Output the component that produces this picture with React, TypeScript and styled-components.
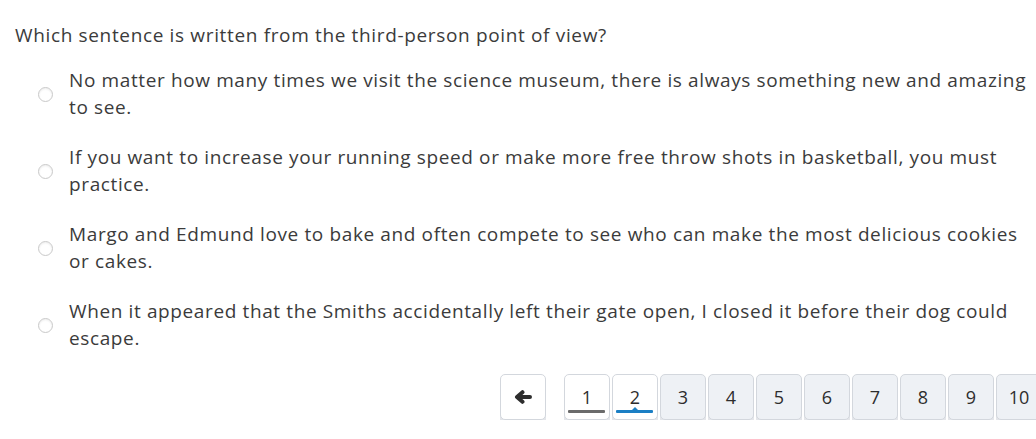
import React from 'react';
import styled, { createGlobalStyle } from 'styled-components';

const GlobalStyle = createGlobalStyle`
  html, body {
    margin: 0;
    padding: 0;
    background: #ffffff;
    overflow: hidden;
  }
  body {
    font-family: 'Open Sans', 'Liberation Sans', sans-serif;
    color: #3b3b3b;
  }
`;

const Page = styled.main`
  width: 1058px;
  padding: 21px 0 0 15px;
  box-sizing: border-box;
`;

const Question = styled.h2`
  margin: 0 0 18px;
  font-size: 19px;
  font-weight: 400;
  letter-spacing: 0.65px;
  line-height: 28px;
  color: #3b3b3b;
`;

const Choices = styled.ul`
  list-style: none;
  width: 1017px;
  box-sizing: border-box;
  margin: 0;
  padding: 0 0 0 23px;
  display: flex;
  flex-direction: column;
  gap: 23px;
`;

const Choice = styled.li`
  display: flex;
  align-items: center;
  gap: 16px;
`;

const Radio = styled.span`
  flex: none;
  width: 15px;
  height: 15px;
  border-radius: 50%;
  border: 1px solid #c9c9c9;
  box-sizing: border-box;
  background: #fff;
  box-shadow: inset 0 1px 2px rgba(0, 0, 0, 0.08);
`;

const ChoiceText = styled.span`
  font-size: 19px;
  letter-spacing: 0.62px;
  line-height: 27px;
  color: #3b3b3b;
`;

const Pager = styled.nav`
  display: flex;
  justify-content: flex-end;
  align-items: flex-start;
  gap: 18px;
  margin-top: 22px;
  padding-right: 16px;
`;

const Pages = styled.div`
  display: flex;
  gap: 2px;
`;

const PageButton = styled.button<{ $active?: boolean; $visited?: boolean }>`
  position: relative;
  width: 46px;
  height: 46px;
  padding: 0;
  border: 1px solid #d3d7dd;
  border-radius: 5px;
  background: ${(p) => (p.$active || p.$visited ? '#ffffff' : '#eef1f5')};
  box-shadow: 0 4px 0 #e4e6ea;
  font-family: 'Open Sans', 'Liberation Sans', sans-serif;
  font-size: 18px;
  color: #2d2d2d;
  display: flex;
  align-items: center;
  justify-content: center;
  cursor: pointer;
`;

const Underline = styled.span<{ $color: string }>`
  position: absolute;
  left: 3px;
  right: 4px;
  bottom: 6px;
  height: 3px;
  border-radius: 1px;
  background: ${(p) => p.$color};
`;

const Caret = styled.span`
  position: absolute;
  left: 50%;
  bottom: 8px;
  margin-left: -4px;
  width: 0;
  height: 0;
  border-left: 4px solid transparent;
  border-right: 4px solid transparent;
  border-bottom: 4px solid #1b7fc4;
`;

const ArrowButton = styled(PageButton)`
  background: #ffffff;
  color: #2e2e2e;
`;

const BackArrow = () => (
  <svg width="18" height="14" viewBox="0 0 18 14" aria-hidden="true">
    <path
      d="M16 7H4M8.5 2.2L3 7l5.5 4.8"
      fill="none"
      stroke="currentColor"
      strokeWidth="4"
      strokeLinecap="round"
      strokeLinejoin="round"
    />
  </svg>
);

const choices = [
  'No matter how many times we visit the science museum, there is always something new and amazing to see.',
  'If you want to increase your running speed or make more free throw shots in basketball, you must practice.',
  'Margo and Edmund love to bake and often compete to see who can make the most delicious cookies or cakes.',
  'When it appeared that the Smiths accidentally left their gate open, I closed it before their dog could escape.',
];

const App: React.FC = () => {
  return (
    <>
      <GlobalStyle />
      <Page>
        <Question>Which sentence is written from the third-person point of view?</Question>
        <Choices>
          {choices.map((c) => (
            <Choice key={c}>
              <Radio />
              <ChoiceText>{c}</ChoiceText>
            </Choice>
          ))}
        </Choices>
        <Pager>
          <ArrowButton aria-label="Previous">
            <BackArrow />
          </ArrowButton>
          <Pages>
            {Array.from({ length: 10 }, (_, i) => i + 1).map((n) => (
              <PageButton key={n} $visited={n === 1} $active={n === 2}>
                {n}
                {n === 1 && <Underline $color="#6b6b6b" />}
                {n === 2 && (
                  <>
                    <Underline $color="#1b7fc4" />
                    <Caret />
                  </>
                )}
              </PageButton>
            ))}
          </Pages>
        </Pager>
      </Page>
    </>
  );
};

export default App;
